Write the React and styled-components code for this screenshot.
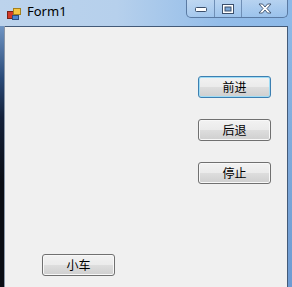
import React from "react";
import styled, { createGlobalStyle } from "styled-components";

const Global = createGlobalStyle`
  html, body {
    margin: 0;
    padding: 0;
    background: #1b2538;
  }
  body {
    font-family: "Noto Sans", "Noto Sans CJK SC", sans-serif;
  }
`;

export default function App() {
  return (
    <>
      <Global />
      <Frame>
        <TitleBar>
          <AppIcon />
          <Caption>Form1</Caption>
          <CaptionButtons>
            <CapButton w={28}>
              <svg width="14" height="8" viewBox="0 0 14 8">
                <rect x="1.5" y="2.5" width="11" height="4" rx="1" fill="#fff" stroke="#3b4f6b" />
              </svg>
            </CapButton>
            <CapButton w={27}>
              <svg width="12" height="10" viewBox="0 0 12 10">
                <rect x="0.5" y="0.5" width="11" height="9" fill="#fff" stroke="#3b4f6b" />
                <rect x="3" y="3" width="6" height="4" fill="#7aa6d6" stroke="#3b4f6b" />
              </svg>
            </CapButton>
            <CapButton w={45} last>
              <svg width="14" height="11" viewBox="0 0 14 11">
                <path
                  d="M1 1h3.5l2.5 3 2.5-3H13L9 5.5 13 10H9.5L7 7 4.5 10H1l4-4.5z"
                  fill="#fff"
                  stroke="#3b4f6b"
                  strokeWidth="0.9"
                  strokeLinejoin="round"
                />
              </svg>
            </CapButton>
          </CaptionButtons>
        </TitleBar>
        <Body>
          <LeftEdge />
          <Client>
            <RightColumn>
              <WinButton focused>前进</WinButton>
              <WinButton>后退</WinButton>
              <WinButton>停止</WinButton>
            </RightColumn>
            <BottomRow>
              <WinButton>小车</WinButton>
            </BottomRow>
          </Client>
          <RightEdge />
        </Body>
      </Frame>
    </>
  );
}

function AppIcon() {
  return (
    <IconBox>
      <svg width="16" height="16" viewBox="0 0 16 16">
        <rect x="1.5" y="5.5" width="6" height="7" fill="#d33a2a" stroke="#7a2418" />
        <rect x="7.5" y="2.5" width="7" height="6" fill="#f5c542" stroke="#a4801c" />
        <rect x="6.5" y="9.5" width="6" height="4" fill="#4d86d0" stroke="#2c4f80" />
      </svg>
    </IconBox>
  );
}

// ==== STYLES ====
const Frame = styled.div`
  width: 292px;
  height: 287px;
  display: flex;
  flex-direction: column;
  overflow: hidden;
`;

const TitleBar = styled.div`
  height: 26px;
  flex: none;
  display: flex;
  align-items: flex-start;
  background: linear-gradient(90deg, #bcd3ec 0%, #b6d0ec 40%, #94bde9 75%, #8db9e8 100%);
`;

const IconBox = styled.div`
  width: 16px;
  height: 16px;
  margin: 5px 0 0 6px;
`;

const Caption = styled.span`
  margin: 3px 0 0 5px;
  font-size: 13px;
  color: #000;
  line-height: 17px;
`;

const CaptionButtons = styled.div`
  margin-left: auto;
  margin-right: 4px;
  display: flex;
  height: 17px;
  border: 1px solid #5a7aa3;
  border-top: none;
  border-radius: 0 0 5px 5px;
  overflow: hidden;
  background: linear-gradient(180deg, rgba(255, 255, 255, 0.35), rgba(200, 225, 250, 0.2));
`;

const CapButton = styled.div`
  width: ${(p) => p.w}px;
  height: 100%;
  display: flex;
  align-items: center;
  justify-content: center;
  border-right: ${(p) => (p.last ? "none" : "1px solid #6f8fb6")};
  box-sizing: border-box;
`;

const Body = styled.div`
  flex: 1;
  display: flex;
`;

const LeftEdge = styled.div`
  width: 4px;
  background: linear-gradient(180deg, #6f95c4 0%, #2a4a78 20%, #14213a 35%, #0a0d14 60%, #0a0d14 100%);
  border-right: 1px solid #8a97a8;
`;

const RightEdge = styled.div`
  width: 4px;
  background: linear-gradient(180deg, #8db8e6 0%, #7ea9da 50%, #6d9bd3 100%);
`;

const Client = styled.div`
  flex: 1;
  background: #f0f0f0;
  border-top: 1px solid #435a78;
  border-right: 1px solid #435a78;
  display: flex;
  flex-direction: column;
`;

const RightColumn = styled.div`
  display: flex;
  flex-direction: column;
  gap: 21px;
  padding: 49px 0 0 193px;
`;

const BottomRow = styled.div`
  padding: 69px 0 0 37px;
`;

const WinButton = styled.button`
  width: 73px;
  height: 22px;
  padding: 0;
  box-sizing: border-box;
  border: 1px solid ${(p) => (p.focused ? "#3c7fb1" : "#707070")};
  border-radius: 3px;
  background: linear-gradient(180deg, #f2f2f2 0%, #ebebeb 48%, #dddddd 52%, #cfcfcf 100%);
  box-shadow: inset 0 0 0 1px ${(p) => (p.focused ? "#9fdcf5" : "#f8f8f8")};
  font-family: "Noto Sans CJK SC", "Noto Sans", sans-serif;
  font-size: 12px;
  line-height: 18px;
  color: #000;
`;
